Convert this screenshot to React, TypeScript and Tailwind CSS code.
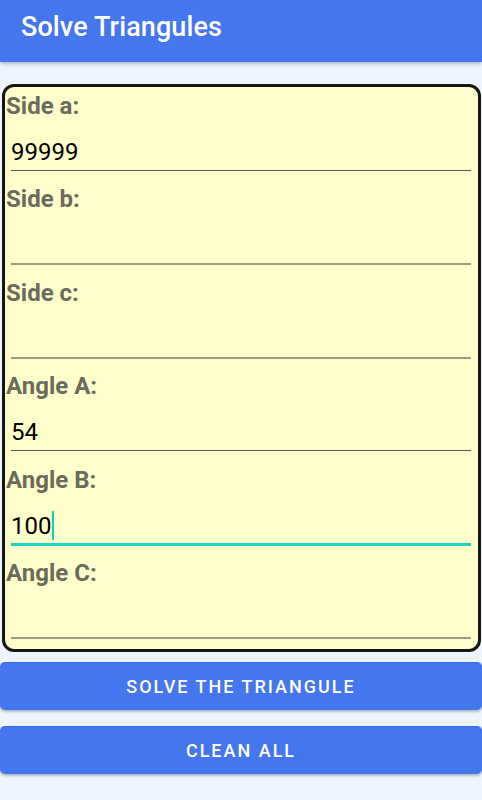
import React, { useState } from 'react';

interface FieldProps {
  label: string;
  value: string;
  focused?: boolean;
}

const Field: React.FC<FieldProps> = ({ label, value, focused }) => {
  const filled = value.length > 0;
  return (
    <div className="h-[93.4px] flex flex-col">
      <div className="pt-[4px] pl-[1px] h-[34px] text-[24px] leading-[30px] font-bold text-[#6b6b5c]">
        {label}
      </div>
      <div className="mt-[16px] ml-[6px] mr-[7px]">
        <div className="h-[30px] text-[24px] leading-[30px] text-black flex items-center">
          <span>{value}</span>
          {focused && <span className="inline-block w-[2px] h-[29px] bg-[#10d0bc] ml-[1px]" />}
        </div>
        <div className="h-[3px]" />
        {focused ? (
          <div className="h-[3px] bg-[#19d2c0] -mt-[1px]" />
        ) : filled ? (
          <div className="h-[1px] bg-[#5e5e58]" />
        ) : (
          <div className="h-[2px] bg-[#9c9c80]" />
        )}
      </div>
    </div>
  );
};

export default function App() {
  const [values] = useState({
    a: '99999',
    b: '',
    c: '',
    A: '54',
    B: '100',
    C: ''
  });

  return (
    <div className="w-[482px] h-[800px] bg-[#eff5fe] font-['Roboto',sans-serif] overflow-hidden">
      {/* Toolbar */}
      <div className="h-[62px] bg-[#4476ee] shadow-[0_2px_4px_rgba(0,0,0,0.25)] flex items-center pl-[21px] pb-[8px]">
        <span className="text-white text-[27px] font-medium tracking-[0.1px]">Solve Triangules</span>
      </div>

      <div className="pt-[22px]">
        {/* Form card */}
        <div className="ml-[2px] mr-[1px] h-[568px] bg-[#ffffcc] border-[3px] border-[#151515] rounded-[12px] overflow-hidden">
          <Field label="Side a:" value={values.a} />
          <Field label="Side b:" value={values.b} />
          <Field label="Side c:" value={values.c} />
          <Field label="Angle A:" value={values.A} />
          <Field label="Angle B:" value={values.B} focused />
          <Field label="Angle C:" value={values.C} />
        </div>

        {/* Actions */}
        <div className="mt-[10px] flex flex-col gap-[16px]">
          <button className="h-[48px] w-full bg-[#4476ee] rounded-[5px] border-t border-[#2f6cf2] shadow-[0_2px_3px_rgba(0,0,0,0.25)] text-white text-[18px] font-medium tracking-[2px]">
            SOLVE THE TRIANGULE
          </button>
          <button className="h-[48px] w-full bg-[#4476ee] rounded-[5px] border-t border-[#2f6cf2] shadow-[0_2px_3px_rgba(0,0,0,0.25)] text-white text-[18px] font-medium tracking-[2px]">
            CLEAN ALL
          </button>
        </div>
      </div>
    </div>
  );
}
